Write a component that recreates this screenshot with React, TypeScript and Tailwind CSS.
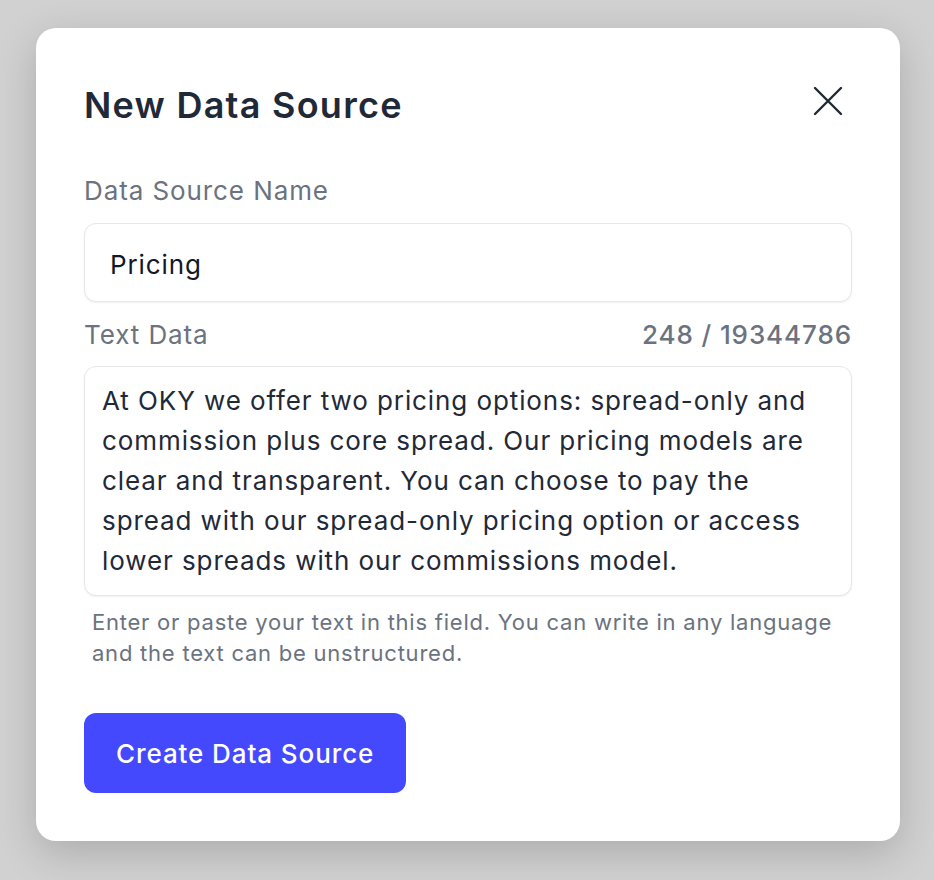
import React, { useState } from 'react';

const MAX_CHARS = 19344786;

const initialText =
  'At OKY we offer two pricing options: spread-only and commission plus core spread. Our pricing models are clear and transparent. You can choose to pay the spread with our spread-only pricing option or access lower spreads with our commissions model.';

export default function App() {
  const [name, setName] = useState('Pricing');
  const [text, setText] = useState(initialText);

  return (
    <div
      className="min-h-[880px] w-full bg-[#d1d1d1] pt-[28px] pl-[36px]"
      style={{ fontFamily: 'Inter, "Noto Sans", sans-serif' }}
    >
      <div className="w-[864px] rounded-[20px] bg-white px-[48px] pt-[57px] pb-[48px] shadow-[0_12px_40px_rgba(0,0,0,0.18)]">
        {/* Header */}
        <div className="flex items-start justify-between">
          <h2 className="text-[36px] leading-[40px] font-semibold tracking-[0.035em] text-[#1f2937]">
            New Data Source
          </h2>
          <button className="mt-[1px] mr-[9px] text-[#1f2937]" aria-label="Close">
            <svg width="30" height="30" viewBox="0 0 30 30" fill="none">
              <path d="M2 2L28 28M28 2L2 28" stroke="currentColor" strokeWidth="2.4" strokeLinecap="round" />
            </svg>
          </button>
        </div>

        {/* Name field */}
        <label className="mt-[50px] block text-[26px] leading-[32px] tracking-[0.035em] text-[#6b7280]">
          Data Source Name
        </label>
        <input
          value={name}
          onChange={(e) => setName(e.target.value)}
          className="mt-[16px] block h-[79px] w-full rounded-[12px] border border-[#e5e7eb] bg-white px-[25px] pt-[3px] text-[26px] tracking-[0.035em] text-[#111827] shadow-[0_1px_2px_rgba(0,0,0,0.06)] outline-none"
        />

        {/* Text data field */}
        <div className="mt-[17px] flex items-center justify-between text-[26px] leading-[32px] tracking-[0.035em] text-[#6b7280]">
          <span>Text Data</span>
          <span className="font-medium">
            {text.length} / {MAX_CHARS}
          </span>
        </div>
        <textarea
          value={text}
          onChange={(e) => setText(e.target.value)}
          rows={5}
          className="mt-[15px] block h-[230px] w-full resize-none rounded-[12px] border border-[#e5e7eb] bg-white px-[17px] pt-[14px] pb-[12px] text-[26px] leading-[40px] tracking-[0.035em] text-[#1f2937] shadow-[0_1px_2px_rgba(0,0,0,0.06)] outline-none"
        />
        <p className="mt-[11px] ml-[8px] text-[22px] leading-[31px] tracking-[0.035em] text-[#6b7280]">
          Enter or paste your text in this field. You can write in any language and the text can be unstructured.
        </p>

        {/* Action */}
        <button className="mt-[44px] h-[80px] rounded-[12px] bg-[#4449fe] px-[32px] text-[26px] font-medium tracking-[0.035em] text-white">
          Create Data Source
        </button>
      </div>
    </div>
  );
}
